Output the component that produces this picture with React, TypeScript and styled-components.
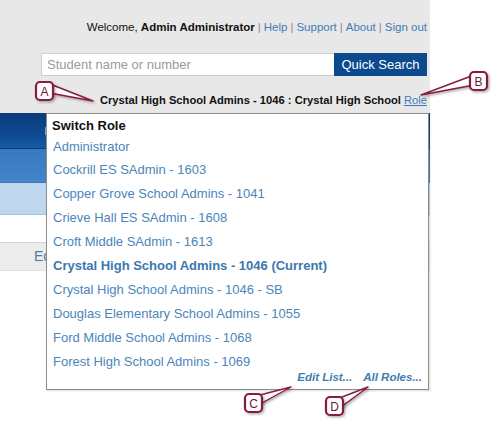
import React from 'react'
import styled, { createGlobalStyle } from 'styled-components'

const GlobalStyle = createGlobalStyle`
    html, body {
        margin: 0;
        padding: 0;
        background: #ffffff;
    }
    body {
        font-family: "Liberation Sans", Arial, sans-serif;
    }
`

const Page = styled.div`
    position: relative;
    width: 500px;
    height: 430px;
    overflow: hidden;
    background: #ffffff;
`

const Main = styled.div`
    width: 430px;
`

const Header = styled.div`
    background: #e8e8e8;
    padding: 20px 3px 6px 0;
    display: flex;
    flex-direction: column;
    align-items: flex-end;
`

const TopLinks = styled.div`
    font-size: 11.5px;
    line-height: 14px;
    color: #111;
    white-space: nowrap;
`

const Link = styled.a`
    color: #3f7cb4;
    text-decoration: none;
`

const Sep = styled.span`
    color: #8a8a8a;
    margin: 0 3px;
`

const SearchRow = styled.div`
    display: flex;
    margin-top: 19px;
    height: 23px;
`

const SearchInput = styled.input`
    box-sizing: border-box;
    width: 293px;
    height: 23px;
    border: 1px solid #cfcfcf;
    border-right: none;
    padding: 0 5px;
    font-family: "Liberation Sans", Arial, sans-serif;
    font-size: 13px;
    outline: none;
    &::placeholder {
        color: #9a9a9a;
    }
`

const SearchButton = styled.button`
    width: 93px;
    height: 23px;
    border: none;
    background: #0b4a8d;
    color: #fff;
    font-family: "Liberation Sans", Arial, sans-serif;
    font-size: 13px;
    padding: 0;
`

const Context = styled.div`
    margin-top: 17px;
    font-size: 11.2px;
    line-height: 14px;
    font-weight: bold;
    color: #111;
    white-space: nowrap;
`

const RoleLink = styled.a`
    color: #3f7cb4;
    font-weight: normal;
    text-decoration: underline;
    margin-left: 3px;
`

const NavBar = styled.div<{ $tone: 'dark' | 'mid' | 'light' }>`
    height: ${({ $tone }) => ($tone === 'dark' ? 35 : $tone === 'mid' ? 33 : 31)}px;
    display: flex;
    align-items: center;
    background: ${({ $tone }) =>
        $tone === 'dark'
            ? 'linear-gradient(#0a3b7c, #0d4a92 60%, #175aa4)'
            : $tone === 'mid'
            ? 'linear-gradient(#3579c0, #4485c8)'
            : '#bed6ee'};
    border-bottom: 1px solid ${({ $tone }) => ($tone === 'light' ? '#a8c3dd' : 'transparent')};
`

const TabDivider = styled.span`
    width: 1px;
    height: 8px;
    margin-left: 45px;
    background: #7fa3cf;
`

const Spacer = styled.div`
    height: 27px;
`

const ToolBar = styled.div`
    height: 27px;
    background: #ececec;
    border-top: 1px solid #d6d6d6;
    border-bottom: 1px solid #e0e0e0;
    padding-left: 34px;
    font-size: 14px;
    line-height: 27px;
    color: #4d7ea8;
`

const Menu = styled.div`
    position: absolute;
    left: 46px;
    top: 113px;
    width: 383px;
    height: 277px;
    box-sizing: border-box;
    background: #fff;
    border: 1px solid #8c8c8c;
    box-shadow: 1px 1px 2px rgba(0, 0, 0, 0.15);
    display: flex;
    flex-direction: column;
`

const MenuTitle = styled.div`
    padding: 1px 0 0 5px;
    height: 21px;
    line-height: 21px;
    font-size: 13px;
    font-weight: bold;
    color: #111;
`

const MenuItem = styled.div<{ $current?: boolean; $first?: boolean }>`
    padding-left: 6px;
    height: ${({ $first }) => ($first ? 22 : 24)}px;
    line-height: ${({ $first }) => ($first ? 22 : 24)}px;
    font-size: 13px;
    font-weight: ${({ $current }) => ($current ? 'bold' : 'normal')};
    color: ${({ $current }) => ($current ? '#3b78ae' : '#4a86bb')};
    white-space: nowrap;
`

const MenuFooter = styled.div`
    display: flex;
    justify-content: flex-end;
    gap: 11px;
    padding-right: 6px;
    margin-top: -4px;
    line-height: 14px;
`

const FooterLink = styled.a`
    font-size: 11.5px;
    font-weight: bold;
    font-style: italic;
    color: #3f7cb4;
    text-decoration: none;
`

const Overlay = styled.svg`
    position: absolute;
    left: 0;
    top: 0;
    pointer-events: none;
`

const roles = [
    'Cockrill ES SAdmin - 1603',
    'Copper Grove School Admins - 1041',
    'Crieve Hall ES SAdmin - 1608',
    'Croft Middle SAdmin - 1613',
    'Crystal High School Admins - 1046 (Current)',
    'Crystal High School Admins - 1046 - SB',
    'Douglas Elementary School Admins - 1055',
    'Ford Middle School Admins - 1068',
    'Forest High School Admins - 1069',
]

interface CalloutProps {
    letter: string
    x: number
    y: number
    tail: [number, number][]
}

const MAROON = '#861b43'

const Callout: React.FC<CalloutProps> = ({ letter, x, y, tail }) => (
    <g>
        <polygon
            points={tail.map(([px, py]) => `${px},${py}`).join(' ')}
            fill="#fff"
            stroke={MAROON}
            strokeWidth={1.4}
            strokeLinejoin="round"
            filter="url(#shade)"
        />
        <rect x={x} y={y} width={17} height={18} rx={4} fill="#fff" stroke={MAROON} strokeWidth={2.2} filter="url(#shade)" />
        <text
            x={x + 8.5}
            y={y + 13.5}
            textAnchor="middle"
            fontFamily='"Liberation Sans", Arial, sans-serif'
            fontSize={12}
            fill="#6e1733"
        >
            {letter}
        </text>
    </g>
)

const App: React.FC = () => {
    return (
        <Page>
            <GlobalStyle />
            <Main>
                <Header>
                    <TopLinks>
                        Welcome, <b>Admin Administrator</b>
                        <Sep>|</Sep>
                        <Link>Help</Link>
                        <Sep>|</Sep>
                        <Link>Support</Link>
                        <Sep>|</Sep>
                        <Link>About</Link>
                        <Sep>|</Sep>
                        <Link>Sign out</Link>
                    </TopLinks>
                    <SearchRow>
                        <SearchInput placeholder="Student name or number" />
                        <SearchButton>Quick Search</SearchButton>
                    </SearchRow>
                    <Context>
                        Crystal High School Admins - 1046 : Crystal High School
                        <RoleLink>Role</RoleLink>
                    </Context>
                </Header>
                <NavBar $tone="dark">
                    <TabDivider />
                </NavBar>
                <NavBar $tone="mid" />
                <NavBar $tone="light" />
                <Spacer />
                <ToolBar>Edit</ToolBar>
            </Main>

            <Menu>
                <MenuTitle>Switch Role</MenuTitle>
                <MenuItem $first>Administrator</MenuItem>
                {roles.map((r) => (
                    <MenuItem key={r} $current={r.endsWith('(Current)')}>
                        {r}
                    </MenuItem>
                ))}
                <MenuFooter>
                    <FooterLink>Edit List...</FooterLink>
                    <FooterLink>All Roles...</FooterLink>
                </MenuFooter>
            </Menu>

            <Overlay width={500} height={430}>
                <defs>
                    <filter id="shade" x="-30%" y="-30%" width="160%" height="160%">
                        <feDropShadow dx={1.5} dy={1.5} stdDeviation={1} floodColor="#000" floodOpacity={0.3} />
                    </filter>
                </defs>
                <Callout letter="A" x={36} y={82} tail={[[50, 84], [93, 101], [50, 93]]} />
                <Callout letter="B" x={470} y={72} tail={[[474, 75], [421, 95], [474, 85]]} />
                <Callout letter="C" x={245} y={394} tail={[[256, 396], [291, 387], [260, 404]]} />
                <Callout letter="D" x={326} y={397} tail={[[337, 399], [368, 387], [341, 407]]} />
            </Overlay>
        </Page>
    )
}

export default App
